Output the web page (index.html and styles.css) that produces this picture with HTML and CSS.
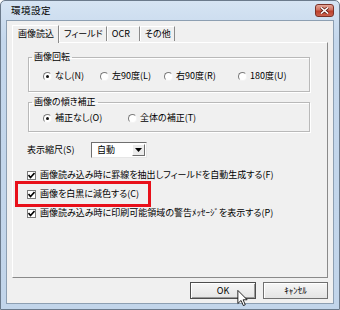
FILE: index.html
```html
<!DOCTYPE html>
<html lang="ja">
<head>
    <meta charset="UTF-8">
    <title>環境設定</title>
    <link rel="stylesheet" href="styles.css">
</head>
<body>
<div class="window">
    <div class="titlebar">
        <span class="title">環境設定</span>
        <button class="close-btn">
            <svg width="9" height="7" viewBox="0 0 9 7">
                <path d="M1 0.5 L8 6.5 M8 0.5 L1 6.5" stroke="#5a1a12" stroke-width="3"/>
                <path d="M1 0.5 L8 6.5 M8 0.5 L1 6.5" stroke="#fff" stroke-width="1.6"/>
            </svg>
        </button>
    </div>
    <div class="client">
        <div class="tabs">
            <div class="tab active">画像読込</div>
            <div class="tab">フィールド</div>
            <div class="tab tab-ocr">OCR</div>
            <div class="tab">その他</div>
        </div>
        <div class="panel">
            <fieldset class="group group-rotate">
                <legend>画像回転</legend>
                <div class="radio-row cols-rotate">
                    <label class="radio"><span class="radio-box checked"></span>なし(N)</label>
                    <label class="radio"><span class="radio-box"></span>左90度(L)</label>
                    <label class="radio"><span class="radio-box"></span>右90度(R)</label>
                    <label class="radio"><span class="radio-box"></span>180度(U)</label>
                </div>
            </fieldset>
            <fieldset class="group group-skew">
                <legend>画像の傾き補正</legend>
                <div class="radio-row cols-skew">
                    <label class="radio"><span class="radio-box checked"></span>補正なし(O)</label>
                    <label class="radio"><span class="radio-box"></span>全体の補正(T)</label>
                </div>
            </fieldset>
            <div class="scale-row">
                <span class="scale-label">表示縮尺(S)</span>
                <div class="select">
                    <span class="select-value">自動</span>
                    <span class="select-btn">
                        <svg width="7" height="4" viewBox="0 0 7 4"><path d="M0 0 H7 L3.5 4 Z" fill="#000"/></svg>
                    </span>
                </div>
            </div>
            <div class="checks">
                <label class="check"><span class="check-box"><svg width="7" height="7" viewBox="0 0 7 7"><path d="M0.5 3 L2.5 5.5 L6.5 1" fill="none" stroke="#000" stroke-width="1.6"/></svg></span>画像読み込み時に罫線を抽出しフィールドを自動生成する(F)</label>
                <label class="check highlight"><span class="check-box"><svg width="7" height="7" viewBox="0 0 7 7"><path d="M0.5 3 L2.5 5.5 L6.5 1" fill="none" stroke="#000" stroke-width="1.6"/></svg></span>画像を白黒に減色する(C)</label>
                <label class="check"><span class="check-box"><svg width="7" height="7" viewBox="0 0 7 7"><path d="M0.5 3 L2.5 5.5 L6.5 1" fill="none" stroke="#000" stroke-width="1.6"/></svg></span>画像読み込み時に印刷可能領域の警告ﾒｯｾｰｼﾞを表示する(P)</label>
            </div>
        </div>
        <div class="buttons">
            <button class="btn default">OK</button>
            <button class="btn">ｷｬﾝｾﾙ</button>
        </div>
    </div>
    <svg class="cursor" width="11" height="16" viewBox="0 0 12 19">
        <path d="M0.5 0.5 L0.5 16 L4.3 12.4 L7 18.5 L9.3 17.5 L6.7 11.6 L11.5 11.6 Z" fill="#fff" stroke="#000" stroke-width="1"/>
    </svg>
</div>
</body>
</html>
```

FILE: styles.css
```css
* {
    box-sizing: border-box;
    margin: 0;
    padding: 0;
}

body {
    width: 340px;
    height: 310px;
    overflow: hidden;
    background-color: #fff;
    font-family: "Noto Sans CJK JP", sans-serif;
    font-size: 9px;
    font-feature-settings: "palt";
    color: #000;
}

.window {
    position: relative;
    height: 310px;
    border: 1px solid #6b7a8b;
    border-radius: 5px 5px 0 0;
    background: linear-gradient(#d6e4f3, #c4d7ec 40px, #c2d5ea);
    padding: 0 5px 5px 5px;
    display: flex;
    flex-direction: column;
}

.titlebar {
    height: 19px;
    display: flex;
    align-items: flex-start;
    justify-content: space-between;
}

.title {
    padding: 3px 0 0 5px;
    font-size: 9.5px;
    line-height: 13px;
    letter-spacing: 0.5px;
}

.close-btn {
    margin-top: 3px;
    width: 19px;
    height: 13px;
    border: 1px solid #7b3127;
    border-radius: 3px;
    background: linear-gradient(#e4a698, #d0705e 45%, #bd3f2b 55%, #c9614d);
    display: flex;
    align-items: center;
    justify-content: center;
}

.client {
    flex: 1;
    background-color: #f0f0f0;
    border: 1px solid #8d9fb2;
    padding: 4px 5px 0 5px;
    display: flex;
    flex-direction: column;
}

.tabs {
    display: flex;
    align-items: flex-end;
    height: 18px;
    margin-bottom: -1px;
    position: relative;
    z-index: 1;
}

.tab {
    height: 15px;
    line-height: 13px;
    padding: 0 3px 0 4px;
    border: 1px solid;
    border-color: #fff #8a8a8a transparent #fff;
    border-bottom: none;
    margin-bottom: 2px;
    white-space: nowrap;
}

.tab.active {
    height: 18px;
    line-height: 16px;
    margin-bottom: 0;
    padding: 0 4px 0 5px;
    background-color: #f0f0f0;
}

.tab-ocr {
    padding-right: 9px;
}

.panel {
    height: 236px;
    border: 1px solid;
    border-color: #fff #8a8a8a #8a8a8a #fff;
    background-color: #f0f0f0;
    padding-top: 8px;
}

.group {
    border: 1px solid #b9b9b9;
    box-shadow: inset 1px 1px 0 #fff, 1px 1px 0 #fff;
    margin: 0 17px 0 15px;
    padding: 0 3px;
}

.group legend {
    padding: 0 2px;
    line-height: 12px;
}

.group-rotate {
    padding-top: 7px;
    padding-bottom: 9px;
}

.group-skew {
    margin-top: 4px;
    padding-top: 4px;
    padding-bottom: 7px;
}

.radio-row {
    display: grid;
    padding-left: 11px;
    height: 12px;
    align-items: center;
}

.cols-rotate {
    grid-template-columns: 57px 64px 74px auto;
}

.cols-skew {
    grid-template-columns: 85px auto;
}

.radio {
    display: flex;
    align-items: center;
    gap: 3px;
    white-space: nowrap;
    line-height: 12px;
}

.radio-box {
    width: 9px;
    height: 9px;
    border-radius: 50%;
    border: 1px solid;
    border-color: #7a7a7a #f4f4f4 #f4f4f4 #7a7a7a;
    background-color: #fff;
    display: flex;
    align-items: center;
    justify-content: center;
}

.radio-box.checked::after {
    content: "";
    width: 3px;
    height: 3px;
    border-radius: 50%;
    background-color: #111;
}

.scale-row {
    display: flex;
    align-items: center;
    margin-top: 10px;
    padding-left: 14px;
    height: 16px;
}

.scale-label {
    width: 64px;
    line-height: 12px;
}

.select {
    width: 56px;
    height: 16px;
    border: 1px solid;
    border-color: #6f6f6f #e6e6e6 #e6e6e6 #6f6f6f;
    background-color: #fff;
    display: flex;
    align-items: center;
    padding: 1px;
}

.select-value {
    flex: 1;
    padding-left: 4px;
    line-height: 12px;
}

.select-btn {
    width: 13px;
    height: 12px;
    background-color: #ececec;
    border: 1px solid;
    border-color: #fff #6f6f6f #6f6f6f #fff;
    display: flex;
    align-items: center;
    justify-content: center;
}

.checks {
    margin-top: 10px;
    padding-left: 14px;
    display: flex;
    flex-direction: column;
    gap: 5px;
}

.check {
    display: flex;
    align-items: center;
    gap: 4px;
    height: 14px;
    line-height: 12px;
    white-space: nowrap;
    width: fit-content;
}

.check-box {
    width: 9px;
    height: 9px;
    border: 1px solid #7a7a7a;
    background-color: #fff;
    display: flex;
    align-items: center;
    justify-content: center;
}

.highlight {
    position: relative;
}

.highlight::after {
    content: "";
    position: absolute;
    top: -6px;
    bottom: -6px;
    left: -12px;
    right: -12px;
    border: 3px solid #e8101a;
}

.buttons {
    display: flex;
    justify-content: flex-end;
    gap: 7px;
    margin-top: 4px;
    padding-right: 0;
}

.btn {
    width: 65px;
    height: 17px;
    font-family: "Noto Sans CJK JP", sans-serif;
    font-size: 9px;
    line-height: 13px;
    color: #000;
    background: linear-gradient(#f6f6f6, #e4e4e4);
    border: 1px solid #707070;
    box-shadow: inset 1px 1px 0 #fff;
}

.btn.default {
    width: 66px;
    border-color: #4d4d4d;
    box-shadow: inset 1px 1px 0 #fff, inset -1px -1px 0 #9a9a9a;
}

.cursor {
    position: absolute;
    left: 236px;
    top: 289px;
}
```
